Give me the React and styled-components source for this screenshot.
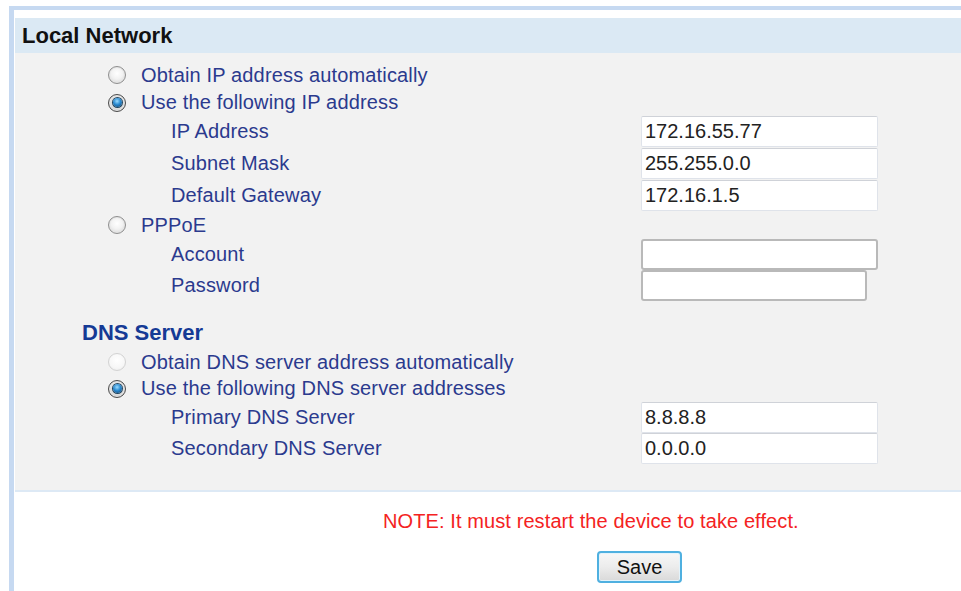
import React from "react";
import styled, { createGlobalStyle, css } from "styled-components";

const Global = createGlobalStyle`
  html, body { margin: 0; padding: 0; background: #ffffff; }
  body { font-family: "Liberation Sans", Arial, sans-serif; overflow: hidden; }
`;

const Page = styled.div`
  padding: 6px 0 0 9px;
  width: 952px;
  height: 585px;
`;

const Frame = styled.div`
  border-top: 4px solid #c6d9f1;
  border-left: 5px solid #c6d9f1;
  padding: 8px 0 0 1px;
  height: 100%;
  box-sizing: border-box;
`;

const Header = styled.div`
  height: 35px;
  background: #dbe9f4;
  display: flex;
  align-items: center;
  padding-left: 7px;
  font-size: 22px;
  font-weight: bold;
  color: #111;
`;

const Body = styled.div`
  background: #f2f2f2;
  padding: 8px 0 26px;
  border-bottom: 2px solid #dde9f5;
`;

const RadioRow = styled.label`
  display: flex;
  align-items: center;
  gap: 15px;
  height: ${(p) => p.$h || 28}px;
  padding-left: 93px;
  font-size: 20px;
  letter-spacing: 0.15px;
  color: #2b3a8e;
`;

const Radio = styled.span`
  box-sizing: border-box;
  width: 18px;
  height: 18px;
  border-radius: 50%;
  flex: none;
  display: flex;
  align-items: center;
  justify-content: center;
  border: 1px solid #8e8e8e;
  background: radial-gradient(circle at 50% 40%, #ffffff 0%, #f2f2f2 45%, #cfcfcf 100%);
  box-shadow: inset 0 0 0 1px #e6e6e6;
  ${(p) =>
    p.$disabled &&
    css`
      border-color: #d3d3d3;
      background: radial-gradient(circle at 50% 40%, #ffffff 0%, #f7f7f7 60%, #e6e6e6 100%);
      box-shadow: none;
    `}
  ${(p) =>
    p.$checked &&
    css`
      border-color: #4a4a4a;
      background: radial-gradient(circle at 50% 40%, #f4f4f4 0%, #dcdcdc 60%, #a8a8a8 100%);
      &::after {
        content: "";
        width: 9px;
        height: 9px;
        border-radius: 50%;
        background: radial-gradient(circle at 45% 35%, #9cdcff 0%, #2a8ad0 45%, #0a3a66 100%);
        box-shadow: 0 0 0 1px #24465f;
      }
    `}
`;

const FieldRow = styled.div`
  display: grid;
  grid-template-columns: 470px auto;
  align-items: center;
  height: ${(p) => p.$h || 32}px;
  padding-left: 156px;
  font-size: 20px;
  letter-spacing: 0.15px;
  color: #2b3a8e;
`;

const TextBox = styled.input`
  box-sizing: border-box;
  width: ${(p) => p.$w || 237}px;
  height: 31px;
  margin: 0;
  padding: 0 3px;
  font-family: "Liberation Sans", Arial, sans-serif;
  font-size: 20px;
  color: #222;
  background: #fff;
  border: 1px solid #dfe3ea;
  border-top-color: #cfd2d8;
  border-radius: 2px;
  outline: none;
  ${(p) =>
    p.$framed &&
    css`
      border: 2px solid #b9b9b9;
      border-radius: 3px;
    `}
`;

const Heading = styled.div`
  display: flex;
  align-items: center;
  height: 30px;
  margin-top: 17px;
  padding-left: 67px;
  font-size: 22px;
  font-weight: bold;
  color: #153a95;
`;

const Footer = styled.div`
  display: flex;
  flex-direction: column;
  align-items: flex-start;
`;

const Note = styled.div`
  margin: 18px 0 0 368px;
  height: 22px;
  line-height: 22px;
  font-size: 20px;
  letter-spacing: 0.1px;
  color: #f42222;
`;

const SaveButton = styled.button`
  margin: 19px 0 0 582px;
  width: 85px;
  height: 32px;
  padding: 0;
  font-family: "Liberation Sans", Arial, sans-serif;
  font-size: 20px;
  color: #111;
  border: 2px solid #4fb0e0;
  border-radius: 4px;
  background: linear-gradient(#f7f7f7 0%, #ececec 50%, #d9d9d9 100%);
  box-shadow: inset 0 0 0 1px #e3f3fb;
`;

function Choice({ checked, disabled, h, children }) {
  return (
    <RadioRow $h={h}>
      <Radio $checked={checked} $disabled={disabled} />
      {children}
    </RadioRow>
  );
}

function Field({ label, value, w, framed, h }) {
  return (
    <FieldRow $h={h}>
      <span>{label}</span>
      <TextBox $w={w} $framed={framed} defaultValue={value} />
    </FieldRow>
  );
}

export default function App() {
  return (
    <>
      <Global />
      <Page>
        <Frame>
          <Header>Local Network</Header>
          <Body>
            <Choice>Obtain IP address automatically</Choice>
            <Choice checked h={27}>Use the following IP address</Choice>
            <Field label="IP Address" value="172.16.55.77" h={31} />
            <Field label="Subnet Mask" value="255.255.0.0" />
            <Field label="Default Gateway" value="172.16.1.5" />
            <Choice>PPPoE</Choice>
            <Field label="Account" value="" framed h={31} />
            <Field label="Password" value="" framed w={226} h={31} />
            <Heading>DNS Server</Heading>
            <Choice disabled>Obtain DNS server address automatically</Choice>
            <Choice checked h={25}>Use the following DNS server addresses</Choice>
            <Field label="Primary DNS Server" value="8.8.8.8" />
            <Field label="Secondary DNS Server" value="0.0.0.0" h={31} />
          </Body>
          <Footer>
            <Note>NOTE: It must restart the device to take effect.</Note>
            <SaveButton>Save</SaveButton>
          </Footer>
        </Frame>
      </Page>
    </>
  );
}
